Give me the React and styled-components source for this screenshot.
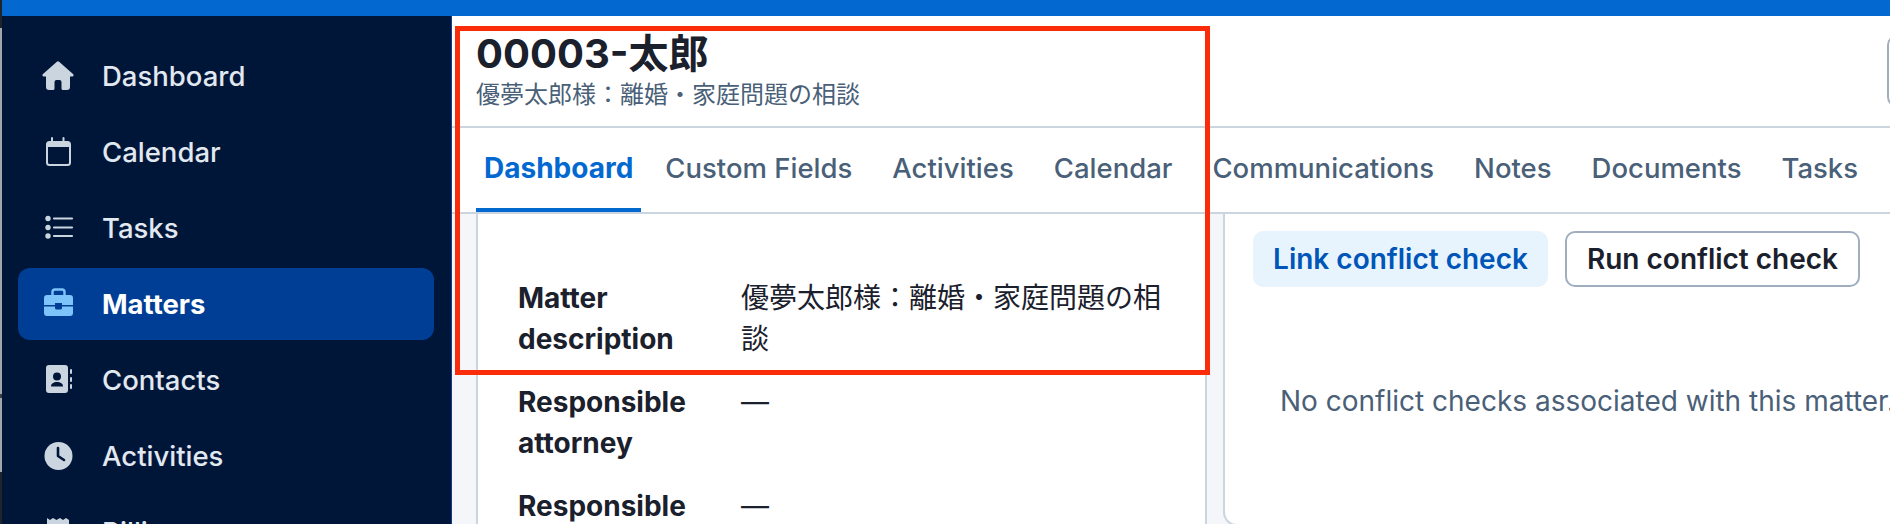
import React from "react";
import styled, { createGlobalStyle } from "styled-components";

const GlobalStyle = createGlobalStyle`
  html, body {
    margin: 0;
    height: 100%;
    overflow: hidden;
    background: #ffffff;
  }
  * {
    box-sizing: border-box;
  }
  body {
    font-family: Inter, "Noto Sans CJK JP", sans-serif;
  }
`;

const navItems = [
  { label: "Dashboard", icon: "home" },
  { label: "Calendar", icon: "calendar" },
  { label: "Tasks", icon: "tasks" },
  { label: "Matters", icon: "briefcase", active: true },
  { label: "Contacts", icon: "contacts" },
  { label: "Activities", icon: "clock" },
  { label: "Billing", icon: "receipt" },
];

const tabs = [
  { label: "Dashboard", active: true },
  { label: "Custom Fields" },
  { label: "Activities" },
  { label: "Calendar" },
  { label: "Communications" },
  { label: "Notes" },
  { label: "Documents" },
  { label: "Tasks" },
];

const details = [
  { label: "Matter description", value: "優夢太郎様：離婚・家庭問題の相談" },
  { label: "Responsible attorney", value: "—" },
  { label: "Responsible staff", value: "—" },
];

const NavIcon = ({ name }) => {
  const dark = "#001639";
  return (
    <IconSvg viewBox="0 0 32 32">
      {name === "home" && (
        <path
          fill="currentColor"
          d="M14.6 2a2 2 0 0 1 2.8 0L31 14a1.3 1.3 0 0 1-.8 2.4H28V27a3 3 0 0 1-3 3h-4a1.5 1.5 0 0 1-1.5-1.5V22a2 2 0 0 0-2-2h-3a2 2 0 0 0-2 2v6.5A1.5 1.5 0 0 1 11 30H7a3 3 0 0 1-3-3V16.4H1.8A1.3 1.3 0 0 1 1 14Z"
        />
      )}
      {name === "calendar" && (
        <g fill="none" stroke="currentColor">
          <rect x="5" y="6" width="23" height="23" rx="2.5" strokeWidth="2" />
          <path d="M5 8.5h23" strokeWidth="5" />
          <path d="M10 2v4M21.5 2v4" strokeWidth="2" strokeLinecap="round" />
        </g>
      )}
      {name === "tasks" && (
        <g fill="currentColor">
          <circle cx="6" cy="6.5" r="2.7" />
          <circle cx="6" cy="15.5" r="2.7" />
          <circle cx="6" cy="24" r="2.7" />
          <path
            d="M12 6.5h18M12 15.5h18M12 24h18"
            stroke="currentColor"
            strokeWidth="2.2"
            strokeLinecap="round"
          />
        </g>
      )}
      {name === "briefcase" && (
        <g fill="currentColor">
          <path
            d="M10.5 7V4a2.5 2.5 0 0 1 2.5-2.5h7A2.5 2.5 0 0 1 22.5 4v3"
            fill="none"
            stroke="currentColor"
            strokeWidth="2.4"
          />
          <path d="M2 10a3 3 0 0 1 3-3h23a3 3 0 0 1 3 3v7H20v-2h-7v2H2Z" />
          <path d="M2 18.5h11V20a1.5 1.5 0 0 0 1.5 1.5h4A1.5 1.5 0 0 0 20 20v-1.5h11V25a3 3 0 0 1-3 3H5a3 3 0 0 1-3-3Z" />
        </g>
      )}
      {name === "contacts" && (
        <g fill="currentColor">
          <rect x="4" y="1" width="22" height="28" rx="3" />
          <circle cx="15" cy="12.5" r="4" fill={dark} />
          <path d="M9 22.5c0-3 2.5-4.5 6-4.5s6 1.500 6 4.500Z" fill={dark} />
          <rect x="28" y="5" width="2" height="5" rx="1" />
          <rect x="28" y="13" width="2" height="5" rx="1" />
          <rect x="28" y="20" width="2" height="5" rx="1" />
        </g>
      )}
      {name === "clock" && (
        <g>
          <circle cx="16.500" cy="16" r="14" fill="currentColor" />
          <path
            d="M16 8v8l6 4"
            fill="none"
            stroke={dark}
            strokeWidth="2.600"
            strokeLinecap="round"
            strokeLinejoin="round"
          />
        </g>
      )}
      {name === "receipt" && (
        <path
          fill="currentColor"
          d="M5 2l3 2 3-2 3.500 2L18 2l3 2 3-2 3 2v24H5Z"
        />
      )}
    </IconSvg>
  );
};

export default function App() {
  return (
    <>
      <GlobalStyle />
      <Page>
        <WindowEdge />
        <Shell>
          <TopBar />
          <Body>
            <Sidebar>
              {navItems.map((item) => (
                <NavItem key={item.label} $active={item.active}>
                  <NavIconSlot $active={item.active}>
                    <NavIcon name={item.icon} />
                  </NavIconSlot>
                  {item.label}
                </NavItem>
              ))}
            </Sidebar>
            <Main>
              <Header>
                <div>
                  <Title>00003-太郎</Title>
                  <Subtitle>優夢太郎様：離婚・家庭問題の相談</Subtitle>
                </div>
                <HeaderAction aria-label="Actions" />
              </Header>
              <TabBar>
                {tabs.map((tab) => (
                  <Tab key={tab.label} $active={tab.active}>
                    {tab.label}
                  </Tab>
                ))}
              </TabBar>
              <Content>
                <DetailsCard>
                  {details.map((row) => (
                    <DetailRow key={row.label}>
                      <DetailLabel>{row.label}</DetailLabel>
                      <DetailValue>{row.value}</DetailValue>
                    </DetailRow>
                  ))}
                </DetailsCard>
                <ConflictCard>
                  <ButtonRow>
                    <LinkButton>Link conflict check</LinkButton>
                    <RunButton>Run conflict check</RunButton>
                  </ButtonRow>
                  <EmptyText>No conflict checks associated with this matter.</EmptyText>
                </ConflictCard>
              </Content>
            </Main>
          </Body>
        </Shell>
        <Highlight />
      </Page>
    </>
  );
}

const Page = styled.div`
  position: relative;
  display: flex;
  width: 1890px;
  height: 524px;
  overflow: hidden;
`;
const WindowEdge = styled.div`
  flex: 0 0 2px;
  background: linear-gradient(
    #20242a 0 28px,
    #a3a7ab 28px 394px,
    #3a3d42 394px 398px,
    #a3a7ab 398px 472px,
    #20242a 472px
  );
`;
const Shell = styled.div`
  flex: 1;
  min-width: 0;
  display: flex;
  flex-direction: column;
`;
const TopBar = styled.div`
  flex: 0 0 16px;
  background: #0369d1;
`;
const Body = styled.div`
  flex: 1;
  min-height: 0;
  display: flex;
`;
const Sidebar = styled.nav`
  flex: 0 0 450px;
  display: flex;
  flex-direction: column;
  gap: 4px;
  padding: 24px 17px 0 16px;
  background: #001639;
  border-right: 1px solid #0a3d8f;
  overflow: hidden;
`;
const NavItem = styled.div`
  flex: 0 0 72px;
  display: flex;
  align-items: center;
  gap: 28px;
  padding-left: 24px;
  border-radius: 12px;
  font-size: 27.5px;
  font-weight: ${(p) => (p.$active ? 700 : 500)};
  color: ${(p) => (p.$active ? "#ffffff" : "#e2e8f0")};
  background: ${(p) => (p.$active ? "#003e95" : "transparent")};
`;
const NavIconSlot = styled.span`
  display: flex;
  color: ${(p) => (p.$active ? "#7cc4fa" : "#cbd5e0")};
`;
const IconSvg = styled.svg`
  width: 32px;
  height: 32px;
  display: block;
`;
const Main = styled.main`
  flex: 0 0 1600px;
  display: flex;
  flex-direction: column;
  min-height: 0;
`;
const Header = styled.header`
  flex: 0 0 112px;
  display: flex;
  justify-content: space-between;
  align-items: center;
  padding: 0 24px;
  border-bottom: 2px solid #cbd5e0;
`;
const Title = styled.h1`
  margin: 0;
  font-size: 40px;
  line-height: 48px;
  font-weight: 700;
  color: #1a202c;
`;
const Subtitle = styled.p`
  margin: 0;
  font-size: 24px;
  line-height: 34px;
  color: #4a5f78;
`;
const HeaderAction = styled.button`
  width: 141px;
  height: 72px;
  background: #ffffff;
  border: 2px solid #a0aec0;
  border-radius: 10px;
`;
const TabBar = styled.div`
  flex: 0 0 84px;
  display: flex;
  gap: 24px;
  padding: 0 24px;
  border-bottom: 2px solid #cbd5e0;
`;
const Tab = styled.div`
  display: flex;
  align-items: center;
  height: 84px;
  padding: 0 8px;
  font-size: ${(p) => (p.$active ? "28px" : "27.5px")};
  font-weight: ${(p) => (p.$active ? 700 : 500)};
  color: ${(p) => (p.$active ? "#0369d1" : "#4a5f78")};
  border-bottom: 4px solid ${(p) => (p.$active ? "#0369d1" : "transparent")};
  margin-right: ${(p) => (p.$active ? "-8px" : "0")};
`;
const Content = styled.div`
  flex: 1;
  min-height: 0;
  display: grid;
  grid-template-columns: 731px 1fr;
  align-items: start;
  gap: 16px;
  padding: 0 24px;
  background: #f4f6f9;
`;
const DetailsCard = styled.section`
  display: flex;
  flex-direction: column;
  gap: 22px;
  padding: 64px 40px 40px;
  background: #ffffff;
  border: 2px solid #cbd5e0;
  border-top: 0;
`;
const DetailRow = styled.div`
  display: grid;
  grid-template-columns: 223px 1fr;
`;
const DetailLabel = styled.div`
  padding-right: 16px;
  font-size: 28px;
  line-height: 41px;
  font-weight: 700;
  color: #1a202c;
`;
const DetailValue = styled.div`
  font-size: 28px;
  line-height: 41px;
  color: #1a202c;
`;
const ConflictCard = styled.section`
  height: 312px;
  padding: 17px 28px 0;
  background: #ffffff;
  border: 2px solid #cbd5e0;
  border-top: 0;
  border-radius: 0 0 14px 14px;
`;
const ButtonRow = styled.div`
  display: flex;
  gap: 17px;
`;
const ActionButton = styled.button`
  height: 56px;
  width: 295px;
  padding: 0;
  border-radius: 10px;
  font-family: inherit;
  font-size: 28px;
  font-weight: 600;
`;
const LinkButton = styled(ActionButton)`
  background: #e8f4fd;
  border: 0;
  color: #0055b8;
`;
const RunButton = styled(ActionButton)`
  background: #ffffff;
  border: 2px solid #a0aec0;
  color: #1a202c;
`;
const EmptyText = styled.p`
  margin: 94px 0 0 27px;
  white-space: nowrap;
  font-size: 28px;
  line-height: 41px;
  color: #4a5f78;
`;
const Highlight = styled.div`
  position: absolute;
  left: 455px;
  top: 26px;
  width: 755px;
  height: 349px;
  border: 5px solid #fb2c0a;
  pointer-events: none;
`;
